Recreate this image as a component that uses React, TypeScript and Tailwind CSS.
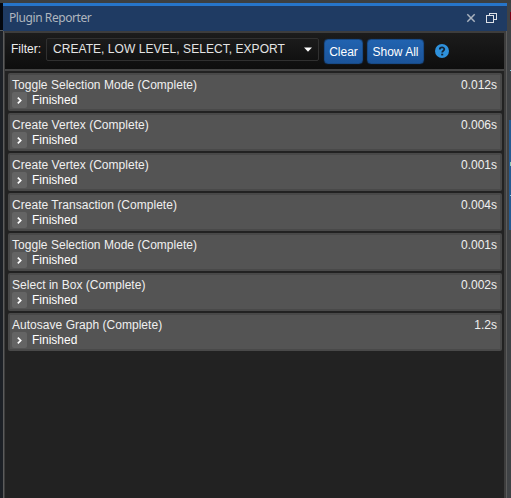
const rows = [
  ['Toggle Selection Mode (Complete)', '0.012s'],
  ['Create Vertex (Complete)', '0.006s'],
  ['Create Vertex (Complete)', '0.001s'],
  ['Create Transaction (Complete)', '0.004s'],
  ['Toggle Selection Mode (Complete)', '0.001s'],
  ['Select in Box (Complete)', '0.002s'],
  ['Autosave Graph (Complete)', '1.2s'],
];

function TitleBar() {
  return (
    <header className="flex h-7 shrink-0 items-center border-t-[3px] border-[#2675ca] bg-[#1f3b63] pl-[6px] pr-[10px]">
      <span className="-mt-[2px] font-['Noto_Sans',sans-serif] text-[12px] leading-4 tracking-[-0.42px] text-[#afb6be]">Plugin Reporter</span>
      <svg className="-mt-[2px] ml-auto mr-[10px]" width="10" height="10" viewBox="0 0 10 10" fill="none" stroke="#aab3bf" strokeWidth="1.5">
        <path d="M1.3 1.3 8.7 8.7M8.7 1.3 1.3 8.7" />
      </svg>
      <svg className="-mt-[2px]" width="11" height="10" viewBox="0 0 11 10" fill="none" stroke="#dde1e7" shapeRendering="crispEdges">
        <path d="M.5 2.5h7v7h-7zM3.5 2.5v-2h7v6h-3" />
      </svg>
    </header>
  );
}

function ToolButton({ label, className }: { label: string; className: string }) {
  return (
    <button
      className={`h-[25px] rounded-[4px] border border-[#174a87] bg-linear-to-b from-[#2163b0] to-[#1b549a] pt-px text-center text-white shadow-[0_0_1px_#174a87] ${className}`}
    >
      {label}
    </button>
  );
}

function Toolbar() {
  return (
    <div className="flex h-[36px] shrink-0 items-start bg-linear-to-b from-[#1c1c1c] to-[#0e0e0e] pl-[6px]">
      <span className="mt-[9px] w-[35px] text-[#eee]">Filter:</span>
      <div className="mt-[5px] flex h-[23px] w-[273px] items-center rounded-[2px] border border-[#303030] bg-linear-to-b from-[#1b1b1b] to-[#111] pl-[6px] pr-[6px] text-[#e4e4e4]">
        <span className="-mt-px tracking-[0.05px]">CREATE, LOW LEVEL, SELECT, EXPORT</span>
        <svg className="ml-auto" width="8" height="5" viewBox="0 0 8 5" fill="#fff">
          <path d="M0 .5h8L4 4.8z" />
        </svg>
      </div>
      <ToolButton label="Clear" className="ml-[5px] mt-[6px] w-[39px]" />
      <ToolButton label="Show All" className="ml-[4px] mt-[6px] w-[57px]" />
      <svg className="ml-[11px] mt-[11px]" width="14" height="14" viewBox="0 0 14 14">
        <circle cx="7" cy="7" r="7" fill="#2e91dc" />
        <path d="M4.8 5.4C4.8 2.8 9.3 2.8 9.3 5.3 9.3 6.8 7.2 6.6 7.2 8.5" fill="none" stroke="#132335" strokeWidth="1.8" />
        <path d="M6.2 9.7h2v1.7h-2z" fill="#132335" />
      </svg>
    </div>
  );
}

function ReportRow({ name, time }: { name: string; time: string }) {
  return (
    <li className="h-[38px] rounded-[2px] border-2 border-[#494949] bg-[#545454] pl-[2px] pr-[3px] pt-[3px]">
      <div className="flex h-[14px] justify-between text-[#f0f0f0]">
        <span className="tracking-[0.03px]">{name}</span>
        <span>{time}</span>
      </div>
      <div className="flex h-[16px] items-start gap-[5px] text-white">
        <span className="flex h-[16px] w-[15px] shrink-0 items-center justify-center rounded-[2px] bg-[#646464]">
          <svg width="5" height="7" viewBox="0 0 5 7" fill="none" stroke="#fff" strokeWidth="1.7">
            <path d="M.8.6 3.7 3.5.8 6.4" />
          </svg>
        </span>
        <span className="mt-px">Finished</span>
      </div>
    </li>
  );
}

export default function App() {
  return (
    <div className="flex h-[498px] w-[511px] flex-col overflow-hidden bg-[#3c3f41] pt-[3px] font-['Liberation_Sans',Arial,sans-serif] text-[12px] leading-[15px]">
      <div className="flex min-h-0 flex-1">
        <div className="flex w-[3px] flex-col">
          <div className="h-[27px] bg-[#03070e]" />
          <div className="h-px bg-[#555b60]" />
          <div className="flex-1 bg-[#1c2026]" />
        </div>
        <div className="flex w-[504px] flex-col">
          <TitleBar />
          <main className="flex min-h-0 flex-1 flex-col border-l border-r border-[#5c5c5c]">
            <div className="flex min-h-0 flex-1 flex-col border-l border-r-2 border-t-2 border-[#3d3d3d]">
              <Toolbar />
              <ul className="flex flex-1 flex-col gap-[2px] border-t-2 border-[#444] bg-[#222] pl-[3px] pr-[2px] pt-[2px]">
                {rows.map(([name, time], i) => (
                  <ReportRow key={i} name={name} time={time} />
                ))}
              </ul>
            </div>
          </main>
        </div>
        <div className="flex flex-1 flex-col items-end bg-[#3f4245]">
          <div className="mt-[9px] h-[8px] w-px bg-[#760016]" />
          <div className="mt-[50px] h-px w-px bg-[#8cc8dd]" />
          <div className="mt-[49px] flex h-[110px] w-[2px] flex-col items-end bg-[#255a91]">
            <div className="mt-[42px] h-[4px] w-px bg-[#8cc8b8]" />
            <div className="mt-[29px] h-px w-px bg-[#8cc8dd]" />
          </div>
        </div>
      </div>
    </div>
  );
}
